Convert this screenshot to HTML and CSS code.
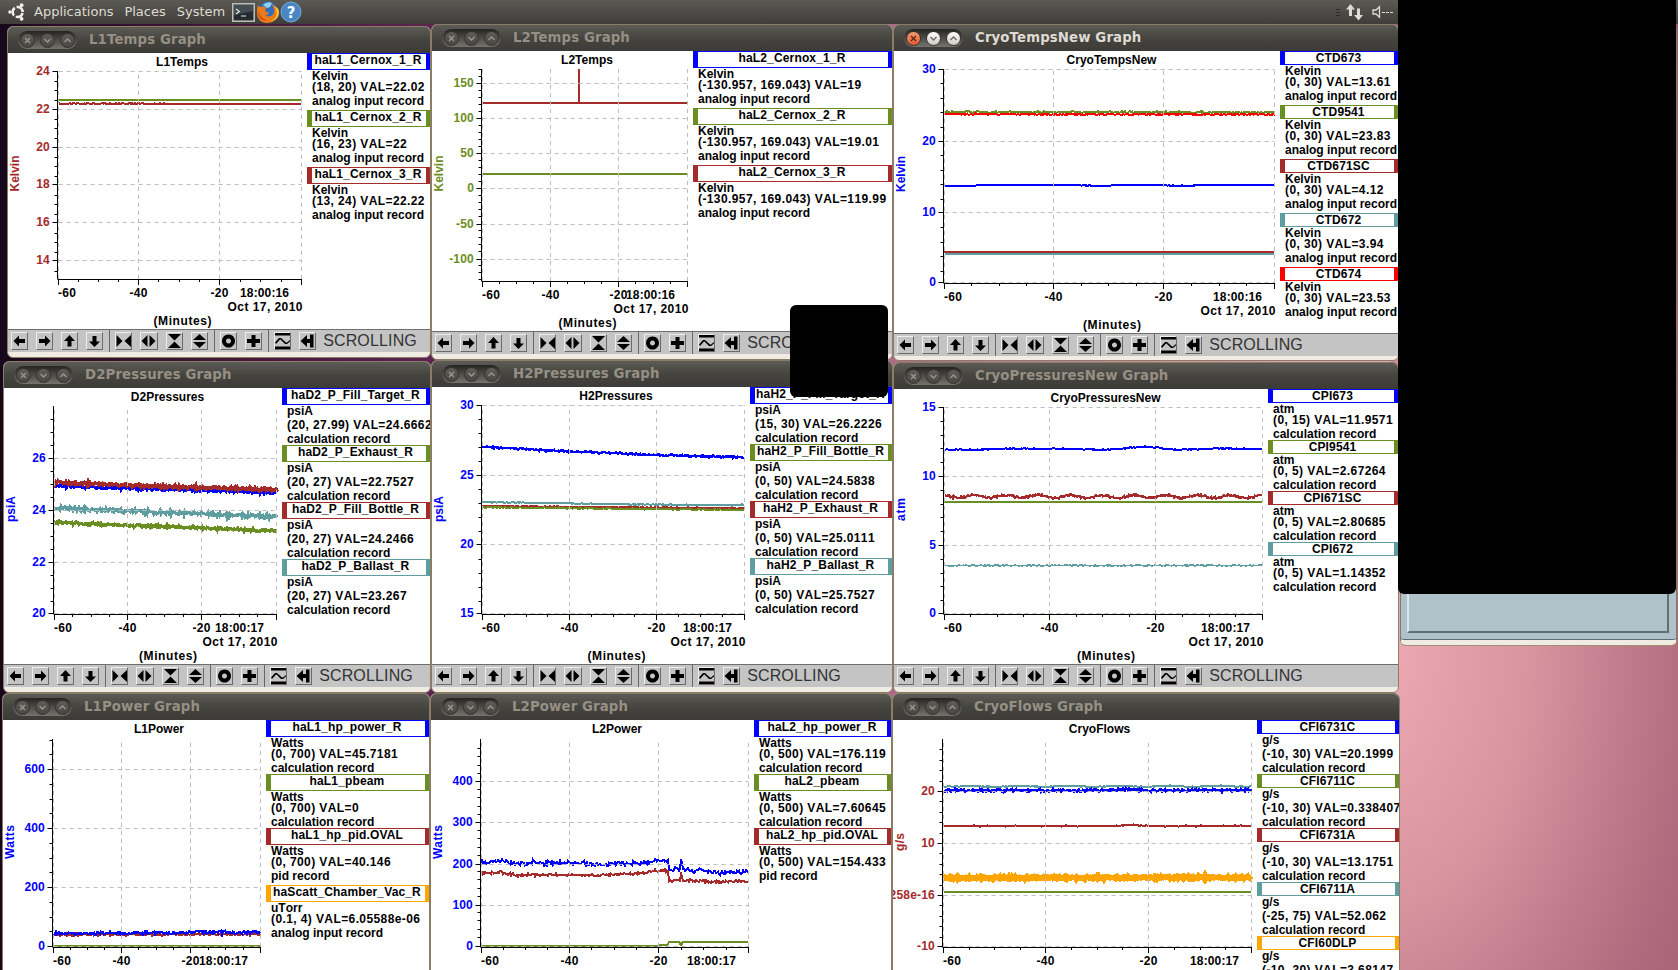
FILE: index.html
```html
<!DOCTYPE html>
<html lang="en">
<head>
<meta charset="utf-8">
<title>Desktop</title>
<link rel="stylesheet" href="styles.css">
</head>
<body>
<div class="desktop">
  <header class="panel">
    <svg class="panel-logo" width="18" height="18" viewBox="0 0 18 18">
      <circle cx="9.6" cy="9" r="5" fill="none" stroke="#f2f0ec" stroke-width="2.6" stroke-dasharray="8.6 1.87" stroke-dashoffset="-1"/>
      <circle cx="1.9" cy="9" r="1.7" fill="#f2f0ec"/>
      <circle cx="13.6" cy="2.2" r="1.9" fill="#f2f0ec"/>
      <circle cx="13.6" cy="15.8" r="1.9" fill="#f2f0ec"/>
    </svg>
    <nav class="panel-menu"><span>Applications</span><span>Places</span><span>System</span></nav>
    <div class="launchers">
      <svg width="23" height="19" viewBox="0 0 23 19">
        <rect x=".8" y=".8" width="21.4" height="17.4" fill="#262b30" stroke="#c4c4c0" stroke-width="1.5"/>
        <path d="M2 2h19v6L2 12z" fill="#454c52"/>
        <path d="M4 6l3.4 2.5L4 11M9 13h5" fill="none" stroke="#e8e8e8" stroke-width="1.1"/>
      </svg>
      <svg width="23" height="23" viewBox="0 0 23 23">
        <circle cx="12" cy="10" r="9.6" fill="#2f6fc0"/>
        <path d="M7 4q4-4 9-2l-2 4-3 1z" fill="#8fd0f2"/>
        <path d="M2 4c1 2 2 2 4 2 2-1 3 0 4 1l-1 3 4 2c-1 2-3 2-4 2 4 3 9 1 9-4 0-3-1-5-3-7 5 2 7 6 7 9 0 6-5 10-11 10S1 18 1 12c0-3 0-5 1-8z" fill="#ea7a18"/>
        <path d="M18 5c5 6 3 14-5 16 6-1 10-4 10-10 0-3-2-5-5-6z" fill="#f8c838"/>
        <path d="M2 9c1 6 4 9 9 10-5 1-9-2-9-10z" fill="#c93a14"/>
      </svg>
      <svg width="22" height="22" viewBox="0 0 22 22">
        <circle cx="11" cy="11" r="10" fill="#4a86c4" stroke="#77a9d8" stroke-width="1"/>
        <text x="11" y="16.5" text-anchor="middle" class="help-mark">?</text>
      </svg>
    </div>
    <svg class="tray" width="60" height="24" viewBox="0 0 60 24">
      <path d="M0 9.500h4M0 12.500h4M0 15.500h4" stroke="#2c2b28"/>
      <path d="M10 9.500L14.500 4 19 9.500h-3V16h-3V9.500zM18 15h3V8.500h3V15h3l-4.500 5.500z" fill="#dfdbd2"/>
      <path d="M37 10h3l3.500-3.200v10.400L40 14h-3z" fill="none" stroke="#dfdbd2" stroke-width="1.300"/>
      <path d="M46 12.500h3M50 12.500h3M54 12.500h3" stroke="#dfdbd2"/>
    </svg>
  </header>
  <main id="windows"></main>
  <section class="control-window"><div class="control-frame"></div></section>
  <div class="mask mask-large"></div>
  <div class="mask mask-small"></div>
</div>
<script src="graphs.js"></script>
</body>
</html>
```
FILE: styles.css
```css
* { box-sizing: border-box; }

body { margin: 0; }

.desktop {
  position: relative;
  width: 1678px;
  height: 970px;
  overflow: hidden;
  font-family: "Liberation Sans", Arial, sans-serif;
  background:
    radial-gradient(ellipse 640px 1020px at -20px 650px, #eeabb5 0%, #d8949f 25%, #b46f81 48%, #a06072 62%, #8a5068 100%) right top / 288px 970px no-repeat,
    linear-gradient(90deg, #16081a 0, #2c0e28 60px, #5c2450 430px, #b0688a 893px, #e3a0b0 1300px, #e8a6b2 1678px);
}

/* top panel */
.panel {
  display: flex;
  align-items: center;
  height: 24px;
  padding-left: 8px;
  background: linear-gradient(#5b5a55, #3e3d39);
  color: #dfdbd2;
  font: 13px/22px "DejaVu Sans", sans-serif;
}
.panel-menu { display: flex; gap: 11px; margin: 0 7px 0 8px; height: 22px; }
.launchers { display: flex; align-items: center; gap: 1px; }
.help-mark { font: bold 15px "DejaVu Sans", sans-serif; fill: #fff; }
.tray { margin-left: auto; margin-right: 282px; }

/* graph windows */
.window {
  position: absolute;
  display: flex;
  flex-direction: column;
  border: 1px solid #8a7d66;
  border-radius: 6px;
  overflow: hidden;
  background: #f0ebe3;
}
.titlebar {
  display: flex;
  align-items: center;
  flex: none;
  height: 26px;
  padding-left: 10px;
  gap: 12px;
  background: linear-gradient(#5c5b56, #45443f 50%, #3c3b37);
  color: #969084;
  font: bold 13.3px/26px "DejaVu Sans", sans-serif;
  letter-spacing: 0.12px;
  white-space: nowrap;
}
.active .titlebar { color: #dfdbd2; }
.window-buttons {
  display: flex;
  align-items: center;
  width: 59px;
  height: 18px;
  padding: 0 2px;
  justify-content: space-between;
  border-radius: 9px;
  background: linear-gradient(#252421, #74736c);
}
.window-buttons i {
  width: 15px;
  height: 15px;
  border-radius: 50%;
  border: 1px solid #343330;
  background: linear-gradient(#5e5d58, #484743);
  color: #9d998f;
  display: block;
}
.window-buttons svg { display: block; }
.active .window-buttons i { background: linear-gradient(#fff, #cfcbc4); color: #6b6963; }
.active .window-buttons i:first-child { background: linear-gradient(#f79b75, #e2592b); color: #5c2814; }

.content { display: flex; flex: none; background: #fff; }
.plot { display: block; flex: none; }
.plot text { font: bold 12px "Liberation Sans", Arial, sans-serif; }
.grid { stroke: #bebebe; stroke-dasharray: 4.2 3.8; fill: none; }
.axis { stroke: #000; fill: none; }
.trace { fill: none; shape-rendering: crispEdges; }

.legend { flex: 1; overflow: hidden; font-weight: bold; font-size: 12px; }
.channel { margin-bottom: 1px; }
.name {
  height: 14px;
  line-height: 13px;
  border: 1px solid;
  border-left-width: 5px;
  border-right-width: 4px;
  text-align: center;
  white-space: nowrap;
  padding-right: 2px;
  letter-spacing: 0.15px;
}
.name.tall { height: 17px; }
.name span { color: #000; }
.line {
  height: 11px;
  line-height: 12px;
  padding-left: 5px;
  white-space: pre;
  font-kerning: none;
}
.line.tall { height: 14px; }
.value { letter-spacing: 0.4px; }

.blue { border-color: #00f; stroke: #00f; }
.olive { border-color: #6b8e23; stroke: #6b8e23; }
.brown { border-color: #a52a2a; stroke: #a52a2a; }
.cadet { border-color: #5f9ea0; stroke: #5f9ea0; }
.red { border-color: #f00; stroke: #f00; }
.orange { border-color: #ffa500; stroke: #ffa500; }
.ink-blue { fill: #00f; }
.ink-olive { fill: #6b8e23; }
.ink-brown { fill: #a52a2a; }

.toolbar {
  display: flex;
  align-items: center;
  flex: none;
  height: 23px;
  border-top: 1px solid #6e6e6e;
  background: #c4c4c4;
  padding-left: 3px;
}
.group { display: flex; gap: 8px; align-items: center; }
.group + .group { height: 22px; border-left: 1px solid #666; margin-left: 6px; padding-left: 5px; }
.tool {
  width: 17.1px;
  height: 18px;
  border: 1px solid;
  border-color: #eee #6a6a6a #6a6a6a #eee;
}
.tool svg { display: block; width: 15px; height: 16px; }
.status { margin-left: 7px; font-size: 16px; line-height: 22px; color: #333; letter-spacing: 0.15px; }

/* control window and blanked areas */
.control-window {
  position: absolute;
  left: 1400px;
  top: 24px;
  width: 277px;
  height: 621px;
  padding: 0 7px 7px 6px;
  background: #b0c2c9;
  border: 1px solid #857a66;
  border-bottom: 5px solid #f0ebe3;
  border-radius: 6px;
  box-shadow: 0 1px #a08f70, inset 0 -1px #5f6b72;
}
.control-frame { height: 100%; border: 2px solid #626d74; border-left-color: #dbe6ea; }
.mask { position: absolute; background: #000; }
.mask-large { left: 1398px; top: 0; width: 278px; height: 594px; border-radius: 0 0 6px 6px; }
.mask-small { left: 790px; top: 305px; width: 98px; height: 92px; border-radius: 6px; }
```
FILE: graphs.js
```js
const AN = 'analog input record', CALC = 'calculation record', PID = 'pid record';

// Trace: [colour, points [[x, y]...], noise amplitude, stroke width, wave amplitude, wave period]
const graphs = [
  { title: 'L1Temps', box: [7, 26, 424, 332], legendX: 307, barY: 329, mid: 182,
    ax: 57.5, top: 71, bottom: 279, gx: [58.5, 138.5, 219.5, 301.5],
    ys: [[24, 71.5], [22, 109.5], [20, 147.5], [18, 184.5], [16, 222.5], [14, 260.5]], div: 4, time: '18:00:16',
    unit: ['Kelvin', 'brown', 191.5, 36],
    traces: [['brown', [[59, 103.6], [165, 103.6]], .5, 2], ['brown', [[160, 104], [301, 104]], 0, 2], ['olive', [[58, 100], [301, 100]], 0, 2]],
    channels: [['blue', 'haL1_Cernox_1_R', 'Kelvin', '(18, 20) VAL=22.02', AN], ['olive', 'haL1_Cernox_2_R', 'Kelvin', '(16, 23) VAL=22', AN], ['brown', 'haL1_Cernox_3_R', 'Kelvin', '(13, 24) VAL=22.22', AN]] },
  { title: 'L2Temps', box: [431, 24, 462, 336], legendX: 693, barY: 331, mid: 587,
    ax: 481.5, top: 69, bottom: 281, gx: [482.5, 550.5, 618.5, 687.5],
    ys: [[150, 83.5], [100, 118.5], [50, 153.5], [0, 188.5], [-50, 224.5], [-100, 259.5]], div: 5, time: '18:00:16',
    unit: ['Kelvin', 'olive', 191.5, 36],
    traces: [['brown', [[483, 103], [579, 103], [579, 69], [579, 103], [687, 103]], 0, 2], ['olive', [[483, 174], [687, 174]], 0, 2]],
    channels: [['blue', 'haL2_Cernox_1_R', 'Kelvin', '(-130.957, 169.043) VAL=19', AN], ['olive', 'haL2_Cernox_2_R', 'Kelvin', '(-130.957, 169.043) VAL=19.01', AN], ['brown', 'haL2_Cernox_3_R', 'Kelvin', '(-130.957, 169.043) VAL=119.99', AN]] },
  { title: 'CryoTempsNew', box: [893, 24, 506, 337], legendX: 1280, barY: 333, mid: 1111.5, active: true,
    ax: 943.5, top: 69, bottom: 283, gx: [944.5, 1053.5, 1163.5, 1274.5],
    ys: [[30, 69.5], [20, 141.5], [10, 212.5], [0, 282.5]], div: 5, time: '18:00:16',
    unit: ['Kelvin', 'blue', 192, 36],
    traces: [['olive', [[945, 112], [1274, 112.3]], .6, 2], ['red', [[944, 114.2], [1275, 114.5]], .5, 2], ['blue', [[944, 185.7], [975, 185.7], [980, 185], [1065, 185], [1085, 185.5], [1110, 185.7], [1115, 185], [1165, 185], [1170, 185.6], [1195, 185.600], [1200, 185], [1274, 185]], .15, 2], ['cadet', [[945, 254], [1274, 254]], .1, 2], ['brown', [[944, 252], [1274, 252]], 0, 2]],
    channels: [['blue', 'CTD673', 'Kelvin', '(0, 30) VAL=13.61', AN], ['olive', 'CTD9541', 'Kelvin', '(0, 30) VAL=23.83', AN], ['brown', 'CTD671SC', 'Kelvin', '(0, 30) VAL=4.12', AN], ['cadet', 'CTD672', 'Kelvin', '(0, 30) VAL=3.94', AN], ['red', 'CTD674', 'Kelvin', '(0, 30) VAL=23.53', AN]] },
  { title: 'D2Pressures', box: [3, 361, 428, 332], legendX: 282, barY: 664, mid: 167.5,
    ax: 53.5, top: 406, bottom: 614, gx: [54.5, 127.5, 201.5, 276.5],
    ys: [[26, 458.5], [24, 510.5], [22, 562.5], [20, 613.5]], div: 4, time: '18:00:17',
    unit: ['psiA', 'blue', 522, 26],
    traces: [['blue', [[54, 486], [277, 492.5]], 1, 3], ['brown', [[54, 482.5], [277, 490]], 1.1, 3.5], ['cadet', [[54, 508], [277, 517]], 1.5, 3], ['olive', [[54, 522.5], [277, 531]], 1, 3.2]],
    channels: [['blue', 'haD2_P_Fill_Target_R', 'psiA', '(20, 27.99) VAL=24.6662', CALC], ['olive', 'haD2_P_Exhaust_R', 'psiA', '(20, 27) VAL=22.7527', CALC], ['brown', 'haD2_P_Fill_Bottle_R', 'psiA', '(20, 27) VAL=24.2466', CALC], ['cadet', 'haD2_P_Ballast_R', 'psiA', '(20, 27) VAL=23.267', CALC]] },
  { title: 'H2Pressures', box: [431, 360, 462, 333], legendX: 750, barY: 664, mid: 616,
    ax: 481.5, top: 405, bottom: 614, gx: [482.5, 569.5, 656.5, 744.5],
    ys: [[30, 405.5], [25, 475.5], [20, 544.5], [15, 613.5]], div: 5, time: '18:00:17',
    unit: ['psiA', 'blue', 522, 26],
    traces: [['blue', [[482, 446.8], [550, 450.5], [656, 454.8], [744, 457.3]], .7, 2.4], ['cadet', [[482, 502], [570, 503.5], [660, 504.8], [744, 505]], .4, 2], ['brown', [[482, 506], [744, 508.3]], .4, 2], ['olive', [[482, 507.3], [744, 510]], .4, 2]],
    channels: [['blue', 'haH2_P_Fill_Target_R', 'psiA', '(15, 30) VAL=26.2226', CALC], ['olive', 'haH2_P_Fill_Bottle_R', 'psiA', '(0, 50) VAL=24.5838', CALC], ['brown', 'haH2_P_Exhaust_R', 'psiA', '(0, 50) VAL=25.0111', CALC], ['cadet', 'haH2_P_Ballast_R', 'psiA', '(0, 50) VAL=25.7527', CALC]] },
  { title: 'CryoPressuresNew', box: [893, 362, 506, 331], legendX: 1268, barY: 664, mid: 1105.5,
    ax: 943.5, top: 407, bottom: 614, gx: [944.5, 1049.5, 1155.5, 1262.5],
    ys: [[15, 407.5], [10, 476.5], [5, 545.5], [0, 613.5]], div: 5, time: '18:00:17',
    unit: ['atm', 'blue', 521, 23],
    traces: [['blue', [[945, 449.7], [980, 449.5], [1000, 448.8], [1060, 448.6], [1100, 449.8], [1120, 448.8], [1142, 446.5], [1155, 447.6], [1178, 449.8], [1220, 448.6], [1262, 449]], .4, 2], ['brown', [[945, 496.5], [1262, 496.5]], .7, 2.4, 1.4, 32], ['olive', [[944, 502], [1262, 502]], .25, 2], ['cadet', [[944, 565.5], [1262, 565.5]], .5, 1.6]],
    channels: [['blue', 'CPI673', 'atm', '(0, 15) VAL=11.9571', CALC], ['olive', 'CPI9541', 'atm', '(0, 5) VAL=2.67264', CALC], ['brown', 'CPI671SC', 'atm', '(0, 5) VAL=2.80685', CALC], ['cadet', 'CPI672', 'atm', '(0, 5) VAL=1.14352', CALC]] },
  { title: 'L1Power', box: [2, 693, 428, 333], legendX: 266, barY: 998, mid: 159, cropped: true,
    ax: 52.5, top: 739, bottom: 947, gx: [53.5, 121.5, 190.5, 260.5],
    ys: [[600, 769.5], [400, 828.5], [200, 887.5], [0, 946.5]], div: 4, time: '18:00:17',
    unit: ['Watts', 'blue', 859, 34],
    traces: [['brown', [[54, 934.6], [260, 934.2]], .8, 2], ['blue', [[54, 933.3], [170, 933], [200, 931.5], [230, 932.8], [260, 932]], 1, 2.2], ['olive', [[53, 946], [260, 946]], 0, 2]],
    channels: [['blue', 'haL1_hp_power_R', 'Watts', '(0, 700) VAL=45.7181', CALC], ['olive', 'haL1_pbeam', 'Watts', '(0, 700) VAL=0', CALC], ['brown', 'haL1_hp_pid.OVAL', 'Watts', '(0, 700) VAL=40.146', PID], ['orange', 'haScatt_Chamber_Vac_R', 'uTorr', '(0.1, 4) VAL=6.05588e-06', AN]] },
  { title: 'L2Power', box: [430, 693, 462, 333], legendX: 754, barY: 998, mid: 617, cropped: true,
    ax: 480.5, top: 739, bottom: 947, gx: [481.5, 569.5, 658.5, 748.5],
    ys: [[400, 781.5], [300, 822.5], [200, 864.5], [100, 905.5], [0, 946.5]], div: 5, time: '18:00:17',
    unit: ['Watts', 'blue', 859, 34],
    traces: [['blue', [[481, 863], [500, 860.5], [515, 863.5], [532, 863], [533, 859], [535, 863], [567, 863], [568, 859], [570, 863], [600, 864], [606, 866], [612, 863], [640, 864], [655, 861], [668, 860], [668.5, 857], [669, 870], [680, 869], [681, 859], [683, 868], [692, 871], [700, 869], [715, 873], [748, 872]], 1.4, 2],
      ['brown', [[481, 873], [500, 872.5], [515, 875], [600, 875], [640, 873.500], [655, 871], [668, 871], [669, 881], [680, 881], [681, 872], [683, 881], [705, 881], [715, 882.5], [735, 881], [748, 882]], 1, 2],
      ['olive', [[481, 946], [659, 946], [660, 945], [668, 944.500], [669, 942], [679, 942], [681, 945], [683, 942], [748, 942]], 0, 2]],
    channels: [['blue', 'haL2_hp_power_R', 'Watts', '(0, 500) VAL=176.119', CALC], ['olive', 'haL2_pbeam', 'Watts', '(0, 500) VAL=7.60645', CALC], ['brown', 'haL2_hp_pid.OVAL', 'Watts', '(0, 500) VAL=154.433', PID]] },
  { title: 'CryoFlows', box: [892, 693, 508, 333], legendX: 1257, barY: 998, mid: 1099.5, cropped: true,
    ax: 942.5, top: 739, bottom: 947, gx: [943.5, 1045.5, 1148.5, 1251.5],
    ys: [[20, 791.5], [10, 843.5], ['258e-16', 895.5], [-10, 946.5]], div: 5, time: '18:00:17',
    unit: ['g/s', 'brown', 851, 18],
    traces: [['cadet', [[944, 786.3], [1251, 786.3]], .4, 2, .5, 50], ['blue', [[944, 790.5], [1110, 790.5], [1130, 789], [1150, 790.5], [1251, 790]], .9, 2.6], ['brown', [[943, 826], [1110, 826], [1130, 825], [1165, 826.3], [1251, 825.7]], .4, 2], ['orange', [[944, 878], [1251, 877.500]], .8, 5.5], ['olive', [[944, 892], [1251, 892]], 0, 2]],
    channels: [['blue', 'CFI6731C', 'g/s', '(-10, 30) VAL=20.1999', CALC], ['olive', 'CFI6711C', 'g/s', '(-10, 30) VAL=0.338407', CALC], ['brown', 'CFI6731A', 'g/s', '(-10, 30) VAL=13.1751', CALC], ['cadet', 'CFI6711A', 'g/s', '(-25, 75) VAL=52.062', CALC], ['orange', 'CFI60DLP', 'g/s', '(-10, 30) VAL=3.68147', '']] }
];

const toolGroups = [
  ['M1.500 8l5.500-5.500v3.500h6v4h-6v3.500z', 'M13.500 8L8 2.500V6H2v4h6v3.500z', 'M7.500 2L13 8H9.500v5.500h-4V8H2z', 'M7.500 14L2 8.500h3.500V3h4v5.500H13z'],
  ['M.5 2v12l6-6zM15 2v12L8.500 8z', 'M6.500 2v12l-6-6zM8.500 2v12l6-6z', 'M1 1h13L7.500 7.500zM1 15h13L7.500 8.500z', 'M7.500 1L14 7H1zM7.500 15L14 9H1z'],
  ['M7.500 1.500a6.500 6.500 0 1 0 .01 0zM7.500 5.500a2.500 2.500 0 1 1-.01 0z', 'M5.500 2h4v4H14v4H9.500v4h-4v-4H1V6h4.500z'],
  ['M-1 0h17v2.500H-1zM-1 13.500h17V16H-1zM0 9.500L4 5h2l5 4.500h1L15 7v1.500L12 11h-2L5.500 6.500H5L1 11z', 'M.5 8L7 2v4h3V1.500h3.500v13H10V10H7v4z']
];

let seed = 7;
const rnd = () => (seed = (seed * 16807) % 2147483647) / 2147483647;

function tracePath([, pts, noise, , wave = 0, period = 1]) {
  if (!noise) return 'M' + pts.map(p => p.join(' ')).join('L');
  let d = '', x = pts[0][0], i = 0;
  for (; x <= pts[pts.length - 1][0]; x++) {
    while (i < pts.length - 2 && x > pts[i + 1][0]) i++;
    const [x0, y0] = pts[i], [x1, y1] = pts[i + 1];
    const t = Math.min(1, (x - x0) / (x1 - x0));
    const n = (rnd() + rnd() + rnd() - 1.5) * 1.5 * noise;
    const y = y0 + (y1 - y0) * t + n + wave * Math.sin((x - 982) / period * 6.283);
    d += (d ? 'L' : 'M') + x + ' ' + y.toFixed(1);
  }
  return d;
}

function ticks(g) {
  let d = `M${g.ax} ${g.top}V${g.bottom + .5}M${g.gx[0]} ${g.bottom + .5}H${g.gx[3] + .5}`;
  const step = (g.ys[1][1] - g.ys[0][1]) / g.div;
  g.ys.forEach(([, y]) => { d += `M${g.ax} ${y}h-5`; });
  for (let k = -g.div; ; k++) {
    const y = Math.floor(g.ys[0][1] + k * step) + .5;
    if (y > g.bottom) break;
    if (y >= g.top && k % g.div) d += `M${g.ax} ${y}h-3`;
  }
  for (let s = 0; s < 3; s++) for (let k = 0; k < 4; k++)
    d += `M${Math.floor(g.gx[s] + (g.gx[s + 1] - g.gx[s]) * k / 4) + .5} ${g.bottom}v${k ? 3 : 6}`;
  return d + `M${g.gx[3]} ${g.bottom}v6`;
}

function plot(g) {
  const x0 = g.box[0] + 1, y0 = g.box[1] + 27, w = g.legendX - x0, h = g.barY - y0;
  const [a, b, c, e] = g.gx, ly = g.bottom + 18;
  const t = (x, y, s, anchor = 'start', extra = '') => `<text x="${x}" y="${y}" text-anchor="${anchor}" ${extra}>${s}</text>`;
  const [unit, ink, uy, ul] = g.unit;
  return `<svg class="plot" width="${w}" height="${h}" viewBox="${x0} ${y0} ${w} ${h}">
    ${g.traces.map(tr => `<path class="trace ${tr[0]}" stroke-width="${tr[3]}" d="${tracePath(tr)}"/>`).join('')}
    <path class="grid" d="${g.gx.map(x => `M${x} ${g.bottom}V${g.top}`).join('')}${g.ys.map(([, y]) => `M${a} ${y}H${e}`).join('')}"/>
    <path class="axis" d="${ticks(g)}"/>
    ${t(g.mid, y0 + 13, g.title, 'middle')}
    ${g.ys.map(([v, y]) => t(g.ax - 7.500, y + 3.800, v, 'end', `class="ink-${ink}" letter-spacing=".2"`)).join('')}
    ${t(a - .5, ly, '-60', 'start', 'textLength="18"')}${t(b, ly, '-40', 'middle', 'textLength="18"')}${t(c, ly, '-20', 'middle', 'textLength="18"')}
    ${t(e - 61.500, ly, g.time, 'start', 'textLength="49"')}
    ${g.cropped ? '' : t(e - 74, ly + 14, 'Oct 17, 2010', 'start', 'textLength="75"') + t(g.mid - 28.500, ly + 28, '(Minutes)', 'start', 'textLength="58"')}
    <text class="ink-${ink}" transform="translate(${x0 + 11} ${uy}) rotate(-90)" textLength="${ul}">${unit}</text>
  </svg>`;
}

const tall = s => /[gpyj_(),]/.test(s) ? ' tall' : '';
const channel = ([color, name, unit, value, rec]) => `<div class="channel">
  <div class="name ${color}${tall(name)}"><span>${name}</span></div>
  <div class="line${tall(unit)}">${unit}</div>
  <div class="line value tall">${value}</div>
  ${rec && `<div class="line${tall(rec)}">${rec}</div>`}</div>`;

const toolbar = '<div class="toolbar">' + toolGroups.map(gr => '<div class="group">' + gr.map(d =>
  `<div class="tool"><svg viewBox="0 0 15 16"><path fill-rule="evenodd" d="${d}"/></svg></div>`).join('') + '</div>').join('') +
  '<span class="status">SCROLLING</span></div>';

const buttons = ['M4 4l5 5M9 4l-5 5', 'M3.500 5l3 3 3-3', 'M3.500 8l3-3 3 3'].map(d =>
  `<i><svg width="13" height="13"><path d="${d}" fill="none" stroke="currentColor" stroke-width="1.300"/></svg></i>`).join('');

document.getElementById('windows').innerHTML = graphs.map(g => {
  const [x, y, w, h] = g.box;
  return `<section class="window${g.active ? ' active' : ''}" style="left:${x}px;top:${y}px;width:${w}px;height:${h}px">
    <div class="titlebar"><div class="window-buttons">${buttons}</div>${g.title} Graph</div>
    <div class="content">${plot(g)}<div class="legend">${g.channels.map(channel).join('')}</div></div>
    ${g.cropped ? '' : toolbar}</section>`;
}).join('');
```
